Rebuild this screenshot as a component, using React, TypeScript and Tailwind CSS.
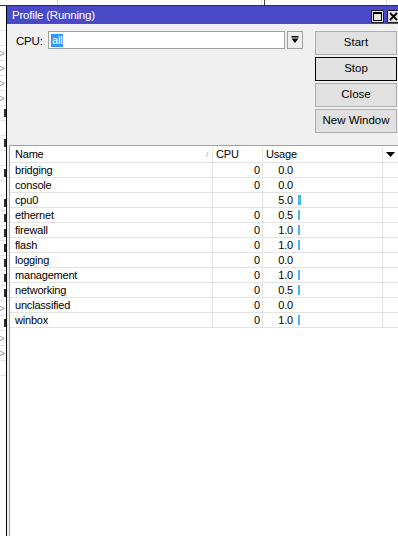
import React from 'react';

const rows = [
  { name: 'bridging', cpu: '0', usage: '0.0', bar: 0 },
  { name: 'console', cpu: '0', usage: '0.0', bar: 0 },
  { name: 'cpu0', cpu: '', usage: '5.0', bar: 3 },
  { name: 'ethernet', cpu: '0', usage: '0.5', bar: 2 },
  { name: 'firewall', cpu: '0', usage: '1.0', bar: 2 },
  { name: 'flash', cpu: '0', usage: '1.0', bar: 2 },
  { name: 'logging', cpu: '0', usage: '0.0', bar: 0 },
  { name: 'management', cpu: '0', usage: '1.0', bar: 2 },
  { name: 'networking', cpu: '0', usage: '0.5', bar: 2 },
  { name: 'unclassified', cpu: '0', usage: '0.0', bar: 0 },
  { name: 'winbox', cpu: '0', usage: '1.0', bar: 2 },
];

// background window peeking out on the left
const sideMarks = ['', '', '>', '>', '>', '>', '|', '', '|', '', '|', '', '|', '|', '|', '|', '|', '|', '|', '>', '|', '>', '>', ''];

const Btn = ({ label, focused }: { label: string; focused?: boolean }) => (
  <button
    className={`h-[24px] w-[82px] text-[11.5px] text-black bg-[#e1e1e1] border ${focused ? 'border-black' : 'border-[#adadad]'}`}
  >
    {label}
  </button>
);

export default function App() {
  return (
    <div className="w-[398px] h-[536px] overflow-hidden bg-white flex flex-col font-['Liberation_Sans',Arial,sans-serif] text-[11px] tracking-[-0.2px] text-black">
      <div className="h-[6px] shrink-0 bg-white flex border-b border-[#303030]">
        <div className="w-[58px] border-r border-[#d8d8d8]" />
        <div className="w-[204px] border-r border-[#d8d8d8]" />
        <div className="w-[3px] border-r border-[#404040]" />
        <div className="w-[122px] border-r border-[#d8d8d8]" />
      </div>

      <div className="flex flex-1 min-h-0">
        <div className="w-[6px] shrink-0 flex flex-col pt-[10px] text-[#9a9a9a] text-[10px] leading-[15px]">
          {sideMarks.map((m, i) => (
            <div key={i} className="h-[15px] border-b border-[#e4e4e4] flex items-center">
              {m === '>' ? <span className="-ml-[1px]">&gt;</span> : m === '|' ? <div className="ml-[4px] w-[2px] h-[8px] bg-[#303030]" /> : null}
            </div>
          ))}
        </div>

        <div className="flex-1 flex flex-col border-l border-black min-w-0">
          <div className="h-[18px] shrink-0 bg-[#4a4ac8] flex items-center justify-between pl-[5px]">
            <span className="text-white text-[11.5px] mt-[1px]">Profile (Running)</span>
            <div className="flex gap-[3px] items-center mt-[2px]">
              <div className="w-[13px] h-[13px] bg-[#e4e4e4] border border-[#202020] flex items-center justify-center">
                <div className="w-[9px] h-[9px] border border-black border-t-2" />
              </div>
              <div className="w-[11px] h-[13px] bg-[#e4e4e4] border border-[#202020] border-r-0 flex items-center justify-center">
                <svg width="9" height="9" viewBox="0 0 9 9">
                  <path d="M1 1 L8 8 M8 1 L1 8" stroke="black" strokeWidth="1.8" />
                </svg>
              </div>
            </div>
          </div>

          <div className="h-[121px] shrink-0 bg-[#f0f0f0] flex justify-between pt-[7px]">
            <div className="flex items-start pl-[9px]">
              <span className="mt-[2px] w-[32px] text-[11.5px]">CPU:</span>
              <div className="w-[237px] h-[18px] bg-white border border-[#a0a0a0] flex items-center px-[2px]">
                <span className="bg-[#3399ff] text-white leading-[13px] px-[1px]">all</span>
              </div>
              <div className="ml-[2px] w-[16px] h-[18px] bg-[#f0f0f0] border border-[#a0a0a0] flex items-center justify-center">
                <svg width="8" height="8" viewBox="0 0 8 8">
                  <rect x="0.5" y="0" width="7" height="1.5" fill="black" />
                  <path d="M0.5 2.5 L7.5 2.5 L4 7 Z" fill="black" />
                </svg>
              </div>
            </div>
            <div className="flex flex-col gap-[2px] pr-[1px] tracking-normal">
              <Btn label="Start" />
              <Btn label="Stop" focused />
              <Btn label="Close" />
              <Btn label="New Window" />
            </div>
          </div>

          <div className="flex-1 bg-[#f0f0f0] pl-[2px] min-h-0">
            <div className="h-full bg-white border-l border-t border-[#a0a0a0]">
              <div className="flex h-[17px] border-b border-[#e3e3e3] pt-[1px]">
                <div className="w-[203px] border-r border-[#e3e3e3] pl-[5px] flex items-center justify-between pr-[4px]">
                  <span>Name</span>
                  <span className="text-[#a0a0a0] text-[8px]">/</span>
                </div>
                <div className="w-[50px] border-r border-[#e3e3e3] pl-[3px] flex items-center">CPU</div>
                <div className="w-[120px] border-r border-[#e3e3e3] pl-[3px] flex items-center">Usage</div>
                <div className="flex-1 flex items-center justify-center">
                  <svg width="9" height="6" viewBox="0 0 9 6">
                    <path d="M0 0 L9 0 L4.5 5 Z" fill="black" />
                  </svg>
                </div>
              </div>
              {rows.map((r) => (
                <div key={r.name} className="flex h-[15px] border-b border-[#e3e3e3] leading-[14px]">
                  <div className="w-[203px] border-r border-[#e3e3e3] pl-[5px]">{r.name}</div>
                  <div className="w-[50px] border-r border-[#e3e3e3] text-right pr-[2px]">{r.cpu}</div>
                  <div className="w-[120px] border-r border-[#e3e3e3] flex items-center">
                    <span className="w-[30px] text-right">{r.usage}</span>
                    {r.bar > 0 && (
                      <div className={`ml-[5px] h-[10px] bg-[#4cb4e6] ${r.bar === 3 ? 'w-[3px]' : 'w-[2px]'}`} />
                    )}
                  </div>
                  <div className="flex-1" />
                </div>
              ))}
            </div>
          </div>
        </div>
      </div>
    </div>
  );
}
